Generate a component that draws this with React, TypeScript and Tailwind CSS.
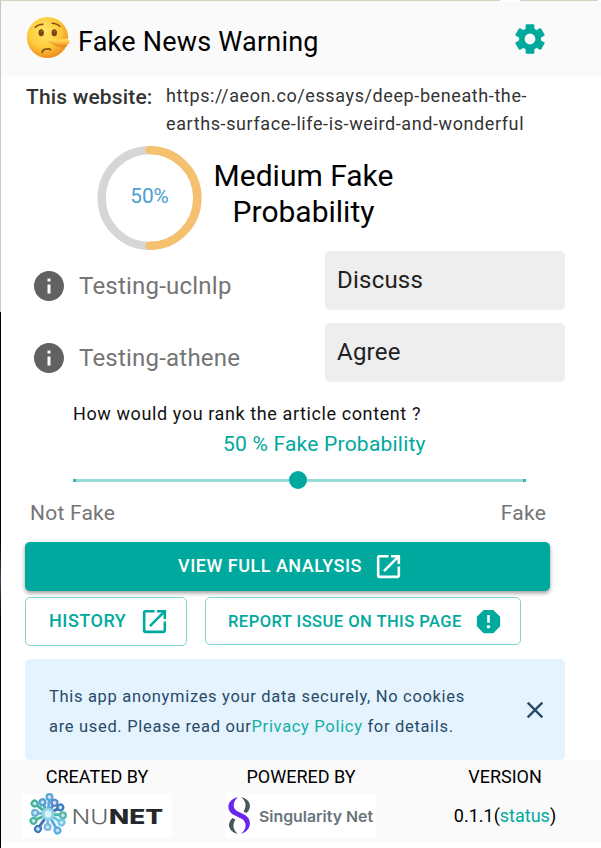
import React from "react";

const OPEN_IN_NEW =
  "M19 19H5V5h7V3H5a2 2 0 0 0-2 2v14a2 2 0 0 0 2 2h14c1.1 0 2-.9 2-2v-7h-2v7zM14 3v2h3.59l-9.83 9.83 1.41 1.41L19 6.41V10h2V3h-7z";
const INFO =
  "M12 2C6.48 2 2 6.48 2 12s4.48 10 10 10 10-4.48 10-10S17.52 2 12 2zm1 15h-2v-6h2v6zm0-8h-2V7h2v2z";
const REPORT =
  "M15.73 3H8.27L3 8.27v7.46L8.27 21h7.46L21 15.73V8.27L15.73 3zM12 17.3c-.72 0-1.3-.58-1.3-1.3 0-.72.58-1.3 1.3-1.3.72 0 1.3.58 1.3 1.3 0 .72-.58 1.3-1.3 1.3zm1-4.3h-2V7h2v6z";
const CLOSE =
  "M19 6.41L17.59 5 12 10.59 6.41 5 5 6.41 10.59 12 5 17.59 6.41 19 12 13.41 17.59 19 19 17.59 13.41 12z";

function Icon({ d, className }: { d: string; className: string }) {
  return (
    <svg viewBox="0 0 24 24" fill="currentColor" className={`shrink-0 ${className}`}>
      <path d={d} />
    </svg>
  );
}

function Gear() {
  return (
    <svg viewBox="-12 -12 24 24" className="h-[36px] w-[36px] shrink-0 text-[#00a99d]">
      <g fill="currentColor">
        <circle r="7.300" />
        <rect x="-2.900" y="-9.900" width="5.800" height="19.800" rx="0.700" />
        <rect x="-2.900" y="-9.900" width="5.800" height="19.800" rx="0.700" transform="rotate(60)" />
        <rect x="-2.900" y="-9.900" width="5.800" height="19.800" rx="0.700" transform="rotate(120)" />
      </g>
      <circle r="3.600" fill="#fafafa" />
    </svg>
  );
}

function LyingFace() {
  return (
    <svg viewBox="0 0 44 44" className="-mt-[2px] h-[44px] w-[44px] shrink-0">
      <defs>
        <radialGradient id="face" cx="0.42" cy="0.35" r="0.65">
          <stop offset="0" stopColor="#ffe868" />
          <stop offset="0.6" stopColor="#fdcb3a" />
          <stop offset="1" stopColor="#f08f20" />
        </radialGradient>
        <linearGradient id="nose" x1="0" y1="0" x2="0" y2="1">
          <stop offset="0" stopColor="#ffed70" />
          <stop offset="0.5" stopColor="#fdc540" />
          <stop offset="1" stopColor="#ee9424" />
        </linearGradient>
      </defs>
      <circle cx="21.500" cy="21.500" r="20.600" fill="url(#face)" />
      <ellipse cx="15.200" cy="16.800" rx="2.700" ry="3.500" fill="#7a4510" />
      <ellipse cx="28.300" cy="16.800" rx="2.700" ry="3.500" fill="#7a4510" />
      <circle cx="15.600" cy="15.600" r="0.800" fill="#a87432" />
      <circle cx="28.700" cy="15.600" r="0.800" fill="#a87432" />
      <path d="M9 11.500Q12 8.500 17 8.300M26 7.200Q31 7.300 34 10.600" fill="none" stroke="#8a5014" strokeWidth="1.400" strokeLinecap="round" />
      <path d="M16 36.500Q17 32.800 20 33.300Q23 31.800 24.500 33.800" fill="none" stroke="#7a4510" strokeWidth="1.500" strokeLinecap="round" />
      <path d="M23 25Q33 32.500 41 29.600" fill="none" stroke="#d98218" strokeWidth="1.600" opacity="0.7" />
      <path d="M23 22.500Q32 25 40.500 22.800Q44 23.200 43.700 26Q43 29 38 29.300Q29 30 23.500 26Q22 24 23 22.500Z" fill="url(#nose)" />
    </svg>
  );
}

function Gauge() {
  return (
    <svg viewBox="0 0 106 106" className="h-[106px] w-[105px] shrink-0">
      <circle cx="53" cy="53" r="48.300" fill="none" stroke="#d6d6d6" strokeWidth="8.400" />
      <path d="M53 4.700A48.300 48.300 0 0 1 53 101.300" fill="none" stroke="#f6c16f" strokeWidth="8.400" strokeLinecap="round" />
      <text x="53" y="58.500" textAnchor="middle" fontSize="21" fill="#4a9fd0">50%</text>
    </svg>
  );
}

function Result({ name, verdict }: { name: string; verdict: string }) {
  return (
    <div className="flex h-[60px]">
      <div className="mt-[10px] flex h-[50px] w-[294px] items-center">
        <Icon d={INFO} className="h-[36px] w-[36px] text-[#616161]" />
        <span className="ml-[12px] text-[24px] leading-[30px] tracking-[0.22px] text-[#757575]">{name}</span>
      </div>
      <div className="h-[59px] w-[240px] rounded-[5px] bg-[#eeeeee] pl-3 text-[24px] leading-[58px] tracking-[0.22px] text-[#212121]">
        {verdict}
      </div>
    </div>
  );
}

const branches = [
  { a: 5, r: 17, c: "#58a9d6" },
  { a: 30, r: 13, c: "#5a87c6" },
  { a: 62, r: 14, c: "#3e78bd" },
  { a: 95, r: 15, c: "#4fb8a5" },
  { a: 122, r: 16, c: "#6fc6e4" },
  { a: 150, r: 19, c: "#58aee5" },
  { a: 182, r: 13, c: "#7cb7df" },
  { a: 214, r: 18, c: "#4277b8" },
  { a: 245, r: 16, c: "#46b79d" },
  { a: 275, r: 13, c: "#6aaed7" },
  { a: 308, r: 17, c: "#40b29a" },
  { a: 335, r: 13, c: "#529fcf" },
];

function NunetLogo() {
  return (
    <svg viewBox="0 0 150 45" className="h-[45px] w-[150px] bg-white">
      <g transform="translate(26 21)">
        {branches.map((b) => (
          <g key={b.a} transform={`rotate(${b.a})`} stroke={b.c} fill="none">
            <path d={`M0 -3L0 ${-b.r + 3}`} strokeWidth="3" />
            <circle cx="0" cy={-b.r} r="2.900" strokeWidth="2.200" fill="#cbe6f3" />
          </g>
        ))}
        <circle r="6.500" fill="#8fd3e6" />
        <circle r="3.500" fill="#d9f3f8" />
      </g>
      <text x="49.500" y="31" fontSize="20" fontFamily="Inter, sans-serif" fontWeight="300" fill="#606468" textLength="37" lengthAdjust="spacingAndGlyphs">NU</text>
      <text x="87" y="31" fontSize="20" fontFamily="Inter, sans-serif" fontWeight="800" fill="#25282b" textLength="54" lengthAdjust="spacingAndGlyphs">NET</text>
    </svg>
  );
}

function SingularityLogo() {
  return (
    <svg viewBox="0 0 150 45" className="h-[45px] w-[150px] bg-white">
      <path d="M12 4C0 7 0 18 8 22L16 26C21 29 21 36 15 41C25 38 27 27 19 22L11 18C6 15 7 8 12 4Z" fill="#6a24ed" />
      <path d="M15 4C20 8 21 13 17.500 18.500L20.500 20C27 14 24 6 15 4Z" fill="#4a565b" />
      <path d="M12 41C7 37 6 32 9.500 26.500L6.500 25C0 31 3 39 12 41Z" fill="#4a565b" />
      <text x="33" y="29" fontSize="15" fontFamily="Inter, sans-serif" fontWeight="600" fill="#69747a" textLength="114" lengthAdjust="spacingAndGlyphs">Singularity Net</text>
    </svg>
  );
}

export default function App() {
  return (
    <div className="relative flex h-[848px] w-[601px] flex-col overflow-hidden bg-white font-[Roboto,sans-serif] text-black">
      <div className="absolute left-0 top-0 h-[312px] w-px bg-[#c9c9ba]" />
      <div className="absolute left-0 top-[312px] h-[536px] w-px bg-linear-to-b from-black from-40% via-[#3b4a63] via-50% to-black to-60%" />
      <div className="absolute left-0 top-0 h-px w-[500px] bg-[#d3d3c2]" />
      <div className="absolute left-[520px] top-0 h-px w-[78px] bg-[#d3d3c2]" />

      <header className="ml-px mt-px flex h-[75px] items-center bg-[#fafafa] pl-[25px]">
        <LyingFace />
        <h1 className="ml-2 mt-[6px] w-[434px] text-[27px] leading-[40px] tracking-[0.22px]">Fake News Warning</h1>
        <Gear />
      </header>

      <section className="flex h-[69px] pl-[26px] pt-[6px] text-[#333333]">
        <div className="w-[140px] text-[21px] font-medium leading-[31px] tracking-[0.16px]">This website:</div>
        <div className="text-[18px] leading-[28px] tracking-[0.6px]">
          https://aeon.co/essays/deep-beneath-the-
          <br />
          earths-surface-life-is-weird-and-wonderful
        </div>
      </section>

      <section className="flex h-[106px] pl-[97px]">
        <Gauge />
        <h2 className="mt-[13px] w-[203px] text-center text-[30px] leading-[36px]">
          Medium Fake
          <br />
          Probability
        </h2>
      </section>

      <section className="flex flex-col gap-3 pl-[31px]">
        <Result name="Testing-uclnlp" verdict="Discuss" />
        <Result name="Testing-athene" verdict="Agree" />
      </section>

      <section className="h-[159px] pt-[15px]">
        <p className="ml-[73px] h-[31px] text-[18px] leading-[31px] tracking-[0.6px] text-[#111111]">
          How would you rank the article content ?
        </p>
        <p className="ml-[223px] text-[21px] leading-[30px] tracking-[0.22px] text-[#00a99d]">50 % Fake Probability</p>
        <div className="ml-[73px] mt-[11px] flex h-[20px] w-[453px] items-center">
          <div className="h-[3px] w-[3px] bg-[#35b9af]" />
          <div className="h-[3px] w-[213px] bg-[#99dcd7]" />
          <div className="h-[18px] w-[18px] rounded-full bg-[#00a99d]" />
          <div className="h-[3px] flex-1 bg-[#99dcd7]" />
          <div className="h-[3px] w-[3px] bg-[#35b9af]" />
        </div>
        <div className="ml-[30px] mt-[8px] flex w-[516px] justify-between text-[21px] leading-[30px] tracking-[0.22px] text-[#757575]">
          <span>Not Fake</span>
          <span>Fake</span>
        </div>
      </section>

      <section className="h-[117px] pl-[25px] font-medium">
        <button className="flex h-[49px] w-[525px] items-center rounded-[5px] bg-[#00a99d] pl-[153px] text-[18px] tracking-[0.51px] text-white shadow-[0_2px_4px_rgba(0,0,0,0.4)]">
          <span className="-mt-[3px] w-[195px] text-left">VIEW FULL ANALYSIS</span>
          <Icon d={OPEN_IN_NEW} className="h-[31px] w-[31px]" />
        </button>
        <div className="mt-[6px] flex text-[#00a99d]">
          <button className="flex h-[49px] w-[162px] items-center rounded-[5px] border border-[#7fd4ce] pl-[23px] text-[18px] tracking-[0.51px]">
            <span className="-mt-[2px] w-[90px] text-left">HISTORY</span>
            <Icon d={OPEN_IN_NEW} className="h-[31px] w-[31px]" />
          </button>
          <button className="ml-[18px] flex h-[48px] w-[316px] items-center rounded-[5px] border border-[#7fd4ce] pl-[22px] text-[16.5px] tracking-[0.47px]">
            <span className="mt-[2px] w-[245px] text-left">REPORT ISSUE ON THIS PAGE</span>
            <Icon d={REPORT} className="h-[31px] w-[31px]" />
          </button>
        </div>
      </section>

      <section className="ml-[25px] flex h-[101px] w-[540px] items-center rounded-[5px] bg-[#e5f3fe] pl-6 text-[#274b69]">
        <p className="mt-[5px] w-[472px] text-[16.5px] leading-[30px] tracking-[0.68px]">
          This app anonymizes your data securely, No cookies
          <br />
          are used. Please read our<span className="text-[#13b0a3]">Privacy Policy</span> for details.
        </p>
        <Icon d={CLOSE} className="h-[28px] w-[28px]" />
      </section>

      <footer className="ml-px flex h-[83px] bg-[#fafafa] text-[18px] leading-[33px]">
        <div className="ml-[21px] w-[150px] text-center">
          CREATED BY
          <NunetLogo />
        </div>
        <div className="ml-[54px] w-[150px] text-center">
          POWERED BY
          <SingularityLogo />
        </div>
        <div className="ml-[54px] w-[150px] text-center">
          VERSION
          <div className="leading-[45px]">
            0.1.1(<span className="text-[#00a99d]">status</span>)
          </div>
        </div>
      </footer>
    </div>
  );
}
